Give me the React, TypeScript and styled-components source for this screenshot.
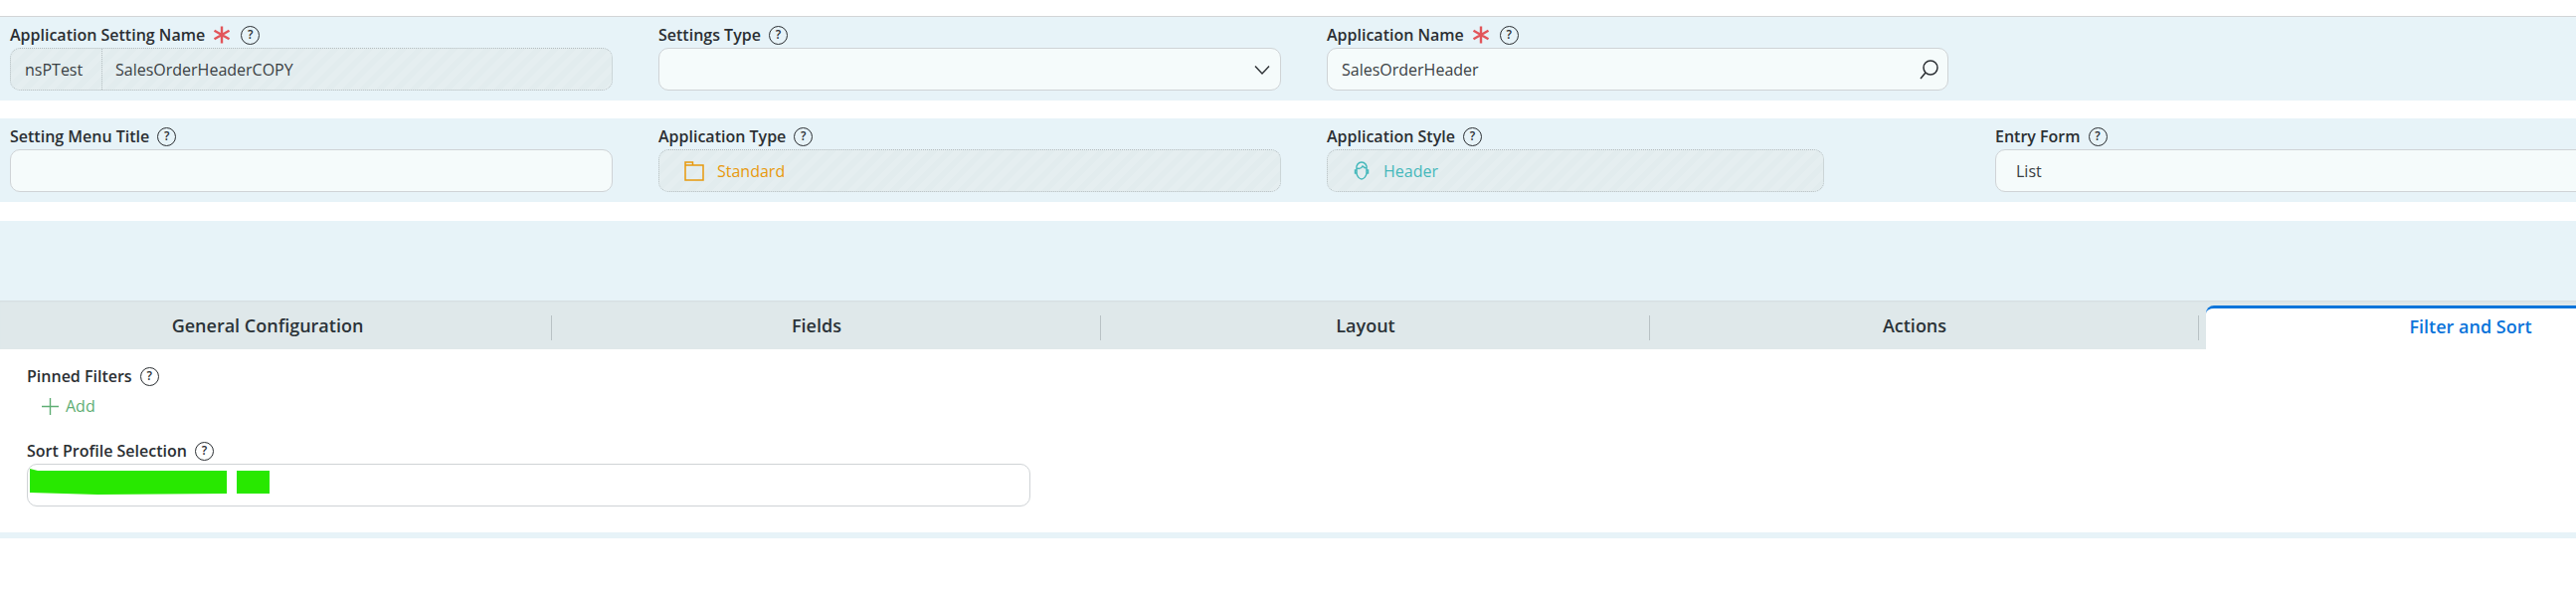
import React from 'react';
import styled, { createGlobalStyle } from 'styled-components';

const Global = createGlobalStyle`
  html, body { margin: 0; padding: 0; background: #fff; overflow: hidden; }
  body { font-family: "Open Sans", "Liberation Sans", sans-serif; color: #2b2f33; }
`;

const Page = styled.div`
  width: 2590px;
  height: 610px;
  overflow: hidden;
  padding-top: 16px;
  box-sizing: border-box;
`;

const TopLine = styled.div`
  height: 1px;
  background: #d2d5d7;
`;

const FormRow = styled.div<{ $mt?: number }>`
  display: flex;
  height: 84px;
  margin-top: ${p => p.$mt ?? 0}px;
  padding-left: 10px;
  background: #e7f3f8;
  box-sizing: border-box;
`;

const Field = styled.div<{ $w: number; $mr?: number }>`
  flex: none;
  width: ${p => p.$w}px;
  margin-right: ${p => p.$mr ?? 0}px;
`;

const LabelRow = styled.div`
  display: flex;
  align-items: center;
  height: 31px;
  padding-top: 5px;
  box-sizing: border-box;
  font-size: 16px;
  font-weight: 600;
  color: #2b2f33;
  white-space: nowrap;
`;

const Star = styled.svg`
  width: 18px;
  height: 18px;
  margin-left: 8px;
  margin-right: 2px;
`;

const Help = styled.span`
  display: inline-flex;
  align-items: center;
  justify-content: center;
  width: 19px;
  height: 19px;
  margin-left: 8px;
  border: 1.5px solid #2b2f33;
  border-radius: 50%;
  box-sizing: border-box;
  font-size: 12px;
  font-weight: 600;
  line-height: 1;
`;

const InputBox = styled.div<{ $pl?: number }>`
  display: flex;
  align-items: center;
  height: 43px;
  padding: 0 8px 0 ${p => p.$pl ?? 14}px;
  background: #f5fbfb;
  border: 1px solid #cfd3d6;
  border-radius: 10px;
  box-sizing: border-box;
  font-size: 16px;
  color: #3a3f43;
`;

const ReadOnlyBox = styled.div`
  display: flex;
  align-items: center;
  height: 43px;
  background: repeating-linear-gradient(135deg, #e2ecee 0 6px, #e5eef0 6px 12px);
  border: 1px dotted #b4bdc0;
  border-radius: 10px;
  box-sizing: border-box;
  font-size: 16px;
  color: #3a3f43;
`;

const Prefix = styled.div`
  display: flex;
  align-items: center;
  align-self: stretch;
  width: 92px;
  padding-left: 14px;
  box-sizing: border-box;
  border-right: 1px dotted #b4bdc0;
`;

const Value = styled.div<{ $color?: string }>`
  padding-left: 13px;
  color: ${p => p.$color ?? '#3a3f43'};
`;

const IconWrap = styled.div`
  display: flex;
  align-items: center;
  padding-left: 25px;
`;

const EndIcon = styled.div`
  margin-left: auto;
  display: flex;
  align-items: center;
`;

const Band = styled.div`
  height: 80px;
  margin-top: 19px;
  background: #e7f3f8;
`;

const TabBar = styled.div`
  display: flex;
  height: 49px;
  padding-left: 3px;
  background: #dfe8ea;
  box-shadow: inset 0 2px 2px -1px #d3dcdf;
`;

const Tab = styled.div<{ $active?: boolean }>`
  position: relative;
  flex: none;
  width: ${p => (p.$active ? 545 : 552)}px;
  margin-left: ${p => (p.$active ? 7 : 0)}px;
  margin-top: ${p => (p.$active ? 5 : 0)}px;
  padding-right: ${p => (p.$active ? 13 : 20)}px;
  box-sizing: border-box;
  display: flex;
  align-items: center;
  justify-content: center;
  font-size: 18px;
  font-weight: 600;
  color: ${p => (p.$active ? '#0a74da' : '#2b3338')};
  background: ${p => (p.$active ? '#fff' : 'transparent')};
  border-top: ${p => (p.$active ? '3px solid #0a74da' : '0')};
  border-top-left-radius: ${p => (p.$active ? '8px' : '0')};
  padding-bottom: ${p => (p.$active ? 6 : 0)}px;
`;

const Divider = styled.span`
  position: absolute;
  right: 0;
  top: 15px;
  width: 1px;
  height: 25px;
  background: #b9c2c5;
`;

const Content = styled.div`
  height: 184px;
  padding: 9px 0 0 27px;
  box-sizing: border-box;
`;

const AddRow = styled.div`
  display: flex;
  align-items: center;
  height: 26px;
  margin: 4px 0 14px 15px;
  font-size: 16px;
  color: #5fae74;
  gap: 7px;
`;

const SortBox = styled.div`
  position: relative;
  width: 1009px;
  height: 43px;
  background: #fff;
  border: 1px solid #cfd3d6;
  border-radius: 10px;
  box-sizing: border-box;
`;

const Redaction = styled.svg`
  position: absolute;
  left: 2px;
  top: 4px;
`;

const BottomBand = styled.div`
  height: 6px;
  background: #e7f3f8;
`;

const Label: React.FC<{ text: string; required?: boolean }> = ({ text, required }) => (
  <LabelRow>
    {text}
    {required && (
      <Star viewBox="0 0 18 18" fill="none" stroke="#e2555a" strokeWidth="2.4">
        <path d="M9 0.500v17M1.500 4.700l15 8.600M16.500 4.700l-15 8.600" />
      </Star>
    )}
    <Help>?</Help>
  </LabelRow>
);

export default function App() {
  return (
    <Page>
      <Global />
      <TopLine />
      <FormRow>
        <Field $w={606} $mr={46}>
          <Label text="Application Setting Name" required />
          <ReadOnlyBox>
            <Prefix>nsPTest</Prefix>
            <Value>SalesOrderHeaderCOPY</Value>
          </ReadOnlyBox>
        </Field>
        <Field $w={626} $mr={46}>
          <Label text="Settings Type" />
          <InputBox>
            <EndIcon>
              <svg width="20" height="20" viewBox="0 0 20 20" fill="none" stroke="#2b2f33" strokeWidth="1.4">
                <path d="M3 6.500l7 7.500 7-7.500" />
              </svg>
            </EndIcon>
          </InputBox>
        </Field>
        <Field $w={625}>
          <Label text="Application Name" required />
          <InputBox>
            SalesOrderHeader
            <EndIcon>
              <svg width="20" height="20" viewBox="0 0 20 20" fill="none" stroke="#2b2f33" strokeWidth="1.5">
                <circle cx="11" cy="8" r="7" />
                <path d="M6 13L1 19" />
              </svg>
            </EndIcon>
          </InputBox>
        </Field>
      </FormRow>
      <FormRow $mt={18}>
        <Field $w={606} $mr={46}>
          <Label text="Setting Menu Title" />
          <InputBox />
        </Field>
        <Field $w={626} $mr={46}>
          <Label text="Application Type" />
          <ReadOnlyBox>
            <IconWrap>
              <svg width="20" height="20" viewBox="0 0 20 20" fill="none" stroke="#e8990c" strokeWidth="1.5">
                <path d="M1 1h7.500v3H19v15H1zM1 4h7.500" />
              </svg>
            </IconWrap>
            <Value $color="#e8990c">Standard</Value>
          </ReadOnlyBox>
        </Field>
        <Field $w={500} $mr={172}>
          <Label text="Application Style" />
          <ReadOnlyBox>
            <IconWrap>
              <svg width="18" height="20" viewBox="0 0 18 20" fill="none" stroke="#45b8bb" strokeWidth="1.500">
                <path d="M4 8c-1-4 2-7 5-7s6 3 5 7v4c0 3-3 6-5 6s-5-3-5-6zM4 7c3 1 5 0 6-2 1 1 2 2 4 2" />
                <path d="M4 9H2.500v3H4M14 9h1.500v3H14" />
              </svg>
            </IconWrap>
            <Value $color="#45b8bb">Header</Value>
          </ReadOnlyBox>
        </Field>
        <Field $w={700}>
          <Label text="Entry Form" />
          <InputBox $pl={20}>List</InputBox>
        </Field>
      </FormRow>
      <Band />
      <TabBar>
        <Tab>General Configuration<Divider /></Tab>
        <Tab>Fields<Divider /></Tab>
        <Tab>Layout<Divider /></Tab>
        <Tab>Actions<Divider /></Tab>
        <Tab $active>Filter and Sort</Tab>
      </TabBar>
      <Content>
        <Label text="Pinned Filters" />
        <AddRow>
          <svg width="17" height="17" viewBox="0 0 17 17" fill="none" stroke="#5fae74" strokeWidth="1.4">
            <path d="M8.500 0v17M0 8.500h17" />
          </svg>
          Add
        </AddRow>
        <Label text="Sort Profile Selection" />
        <SortBox>
          <Redaction width="242" height="28" viewBox="0 0 242 28" fill="#28e800">
            <path d="M0 0l8 2 190 0v23l-130 1-68-2z" />
            <path d="M208 2h33v23h-33z" />
          </Redaction>
        </SortBox>
      </Content>
      <BottomBand />
    </Page>
  );
}
